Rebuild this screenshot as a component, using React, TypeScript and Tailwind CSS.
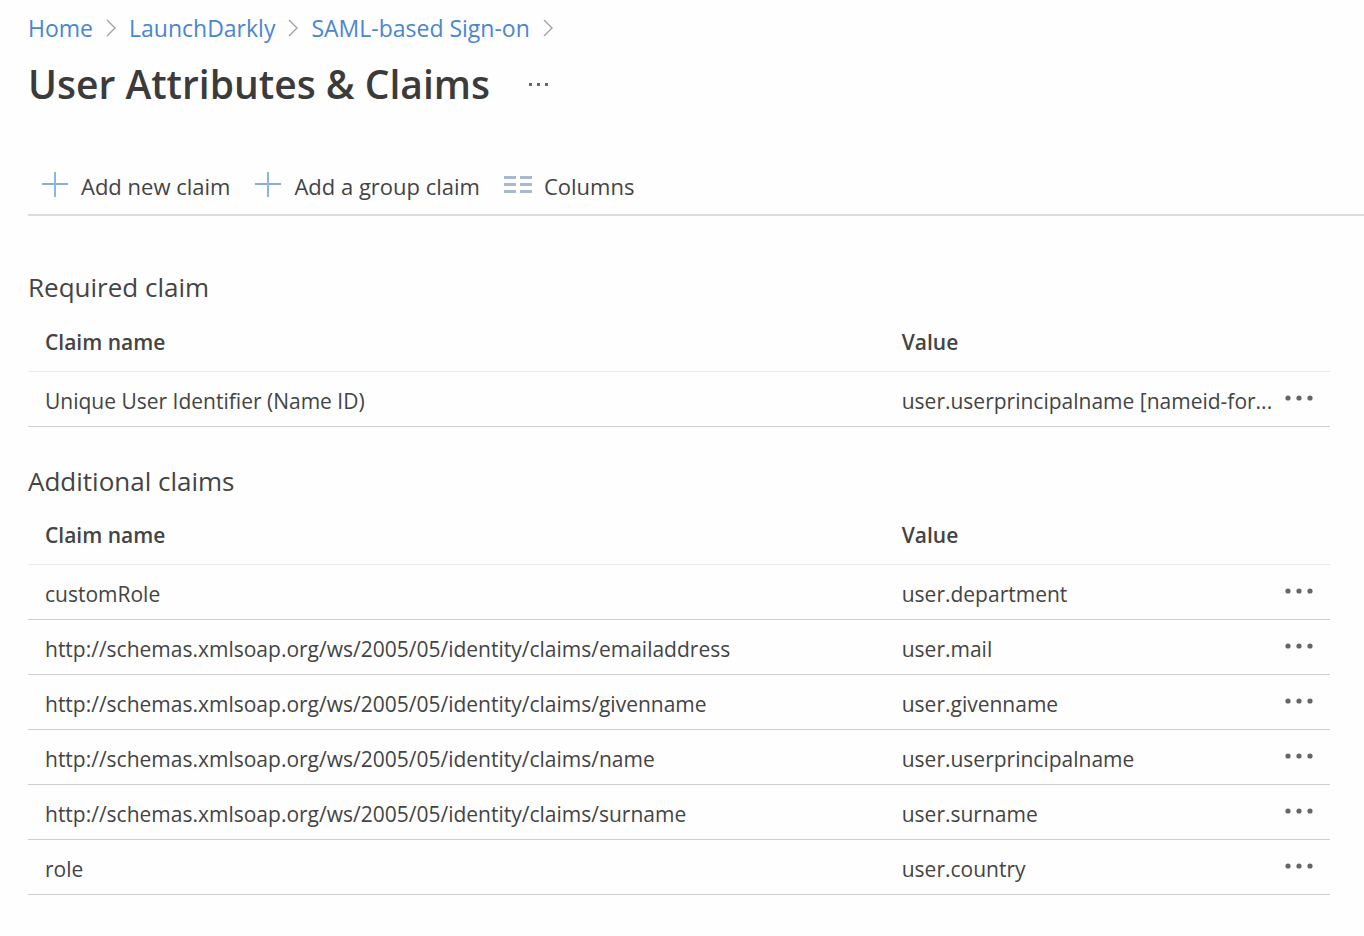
type Claim = { name: string; value: string };

const crumbs = ["Home", "LaunchDarkly", "SAML-based Sign-on"];

const requiredClaims: Claim[] = [
  { name: "Unique User Identifier (Name ID)", value: "user.userprincipalname [nameid-for..." },
];

const additionalClaims: Claim[] = [
  { name: "customRole", value: "user.department" },
  { name: "http://schemas.xmlsoap.org/ws/2005/05/identity/claims/emailaddress", value: "user.mail" },
  { name: "http://schemas.xmlsoap.org/ws/2005/05/identity/claims/givenname", value: "user.givenname" },
  { name: "http://schemas.xmlsoap.org/ws/2005/05/identity/claims/name", value: "user.userprincipalname" },
  { name: "http://schemas.xmlsoap.org/ws/2005/05/identity/claims/surname", value: "user.surname" },
  { name: "role", value: "user.country" },
];

function Chevron() {
  return (
    <svg className="h-5 w-3 shrink-0" viewBox="0 0 12 20" fill="none" stroke="#a3a3a3" strokeWidth="1.4" aria-hidden="true">
      <path d="M2 2 10 10 2 18" />
    </svg>
  );
}

function PlusIcon() {
  return (
    <svg className="h-7 w-7 shrink-0" viewBox="0 0 28 28" fill="none" strokeWidth="2" aria-hidden="true">
      <path d="M1 12H27" stroke="#8fabd3" />
      <path d="M14 -1V25" stroke="#8db4e6" />
    </svg>
  );
}

function ColumnsIcon() {
  return (
    <svg className="h-7 w-7 shrink-0" viewBox="0 0 28 28" fill="#a9b9d3" aria-hidden="true">
      <path d="M0 4h12v3H0zM16 4h12v3H16zM0 11h12v3H0zM16 11h12v3H16zM0 18h12v3H0zM16 18h12v3H16z" />
    </svg>
  );
}

function ClaimsTable({ title, claims }: { title: string; claims: Claim[] }) {
  return (
    <section>
      <h2 className="text-[26px] leading-8">{title}</h2>
      <table className="mt-2.5 w-full table-fixed border-collapse text-left text-[21px] leading-7">
        <thead>
          <tr className="h-[58px] border-b border-[#eaeaea]">
            <th className="w-[65.8%] px-[17px] font-semibold">Claim name</th>
            <th className="pl-[17px] font-semibold">Value</th>
            <td className="w-[62px]" />
          </tr>
        </thead>
        <tbody>
          {claims.map((claim) => (
            <tr key={claim.name} className="h-[55px] border-b border-[#cfcfcf]">
              <td className="px-[17px] pt-1">{claim.name}</td>
              <td className="pt-1 pl-[17px] whitespace-nowrap">{claim.value}</td>
              <td className="pr-4">
                <button type="button" aria-label={`More actions for ${claim.name}`} className="ml-auto block">
                  <svg className="h-6 w-[30px]" viewBox="0 0 30 24" fill="#666666" aria-hidden="true">
                    <circle cx="4" cy="11" r="2.6" />
                    <circle cx="15" cy="11" r="2.6" />
                    <circle cx="26" cy="11" r="2.6" />
                  </svg>
                </button>
              </td>
            </tr>
          ))}
        </tbody>
      </table>
    </section>
  );
}

export default function App() {
  return (
    <div className="min-h-screen bg-[#fefefe] pl-7 font-['Open_Sans','Noto_Sans',sans-serif] text-[#444444]">
      <nav aria-label="Breadcrumb" className="flex items-center gap-3 pt-3 text-[23px] leading-8 text-[#4a86cf]">
        {crumbs.map((crumb) => (
          <span key={crumb} className="flex items-center gap-3">
            <a href="#">{crumb}</a>
            <Chevron />
          </span>
        ))}
      </nav>
      <header className="mt-3 flex items-center gap-[38px]">
        <h1 className="text-[39px] leading-14 font-semibold text-[#3b3b3b]">User Attributes &amp; Claims</h1>
        <button type="button" aria-label="More options">
          <svg className="h-6 w-5" viewBox="0 0 20 24" fill="#666666" aria-hidden="true">
            <path d="M1 11h3v3H1zM9 11h3v3H9zM17 11h3v3H17z" />
          </svg>
        </button>
      </header>
      <div className="mt-[58px] flex gap-6 border-b-2 border-[#dcdcdc] pb-3 pl-[13px] text-[22px] leading-8">
        <button type="button" className="flex items-center gap-3">
          <PlusIcon />
          Add new claim
        </button>
        <button type="button" className="flex items-center gap-3">
          <PlusIcon />
          Add a group claim
        </button>
        <button type="button" className="flex items-center gap-3">
          <ColumnsIcon />
          Columns
        </button>
      </div>
      <main className="mt-[55px] flex flex-col gap-[38px] pr-[34px]">
        <ClaimsTable title="Required claim" claims={requiredClaims} />
        <ClaimsTable title="Additional claims" claims={additionalClaims} />
      </main>
    </div>
  );
}
